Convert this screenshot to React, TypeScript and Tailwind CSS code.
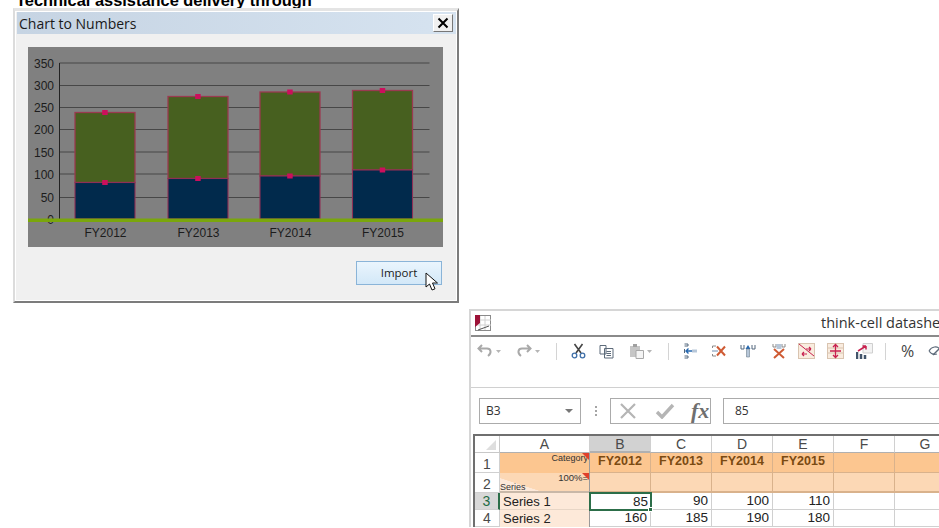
import React from "react";

const ui = "font-['Open_Sans','Noto_Sans',sans-serif]";
const arial = "font-['Liberation_Sans',Arial,sans-serif]";

function Chart() {
  const ticks = [
    [350, 63.5], [300, 86], [250, 108], [200, 130], [150, 152.5], [100, 174.5], [50, 198], [0, 220],
  ];
  const bars = [
    { x: 47, top: 65.5, split: 135.5, label: "FY2012" },
    { x: 140, top: 49.5, split: 131.5, label: "FY2013" },
    { x: 232, top: 45, split: 129, label: "FY2014" },
    { x: 324.5, top: 43.5, split: 123, label: "FY2015" },
  ];
  return (
    <svg width="415" height="200" viewBox="0 0 415 200" className="block">
      <rect width="415" height="200" fill="#808080" />
      {ticks.map(([v, y]) => (
        <g key={v}>
          {v !== 0 && <line x1="31.5" x2="401.5" y1={y - 47.5} y2={y - 47.5} stroke="#474747" strokeWidth="1" />}
          <text x="26" y={y - 47.5 + 4.5} textAnchor="end" fontSize="12" fill="#1c1c1c" fontFamily="Liberation Sans, Arial, sans-serif">
            {v}
          </text>
        </g>
      ))}
      <line x1="31.5" x2="31.5" y1="16" y2="172" stroke="#222" strokeWidth="1" />
      {bars.map((b) => (
        <g key={b.label}>
          <rect x={b.x} y={b.top} width="60" height={b.split - b.top} fill="#47601f" stroke="#9a3a50" strokeWidth="1.3" />
          <rect x={b.x} y={b.split} width="60" height={172 - b.split} fill="#012a4c" stroke="#8e2f55" strokeWidth="1.1" />
          <rect x={b.x + 27.2} y={b.top - 2.5} width="5.5" height="5" fill="#cc0f5c" />
          <rect x={b.x + 27.2} y={b.split - 2.5} width="5.5" height="5" fill="#cc0f5c" />
          <text x={b.x + 30.5} y="190" textAnchor="middle" fontSize="12" fill="#1c1c1c" fontFamily="Liberation Sans, Arial, sans-serif">
            {b.label}
          </text>
        </g>
      ))}
      <path d="M0 173.2H415" stroke="#7aa60c" strokeWidth="3.4" />
    </svg>
  );
}

function Cursor() {
  return (
    <svg width="15" height="21" viewBox="0 0 15 21" className="absolute left-[69px] top-[11px]">
      <path d="M1 1 L1 15 L4.5 12 L7 18 L10 16.8 L7.5 11 L12.5 11 Z" fill="#fff" stroke="#111" strokeWidth="1" />
    </svg>
  );
}

function Dialog() {
  return (
    <div className="ml-[13px] w-[446px] h-[295px] bg-[#f0f0f0] border-t-[3px] border-l-[2px] border-t-[#e4e4e4] border-l-[#dcdcdc] border-r-[2px] border-r-[#7c7c7c] border-b-[2px] border-b-[#7c7c7c] shadow-[inset_0_0_0_1px_#ffffff]">
      <div className="ml-[2px] mr-[1px] h-[22px] mt-[1px] flex items-center justify-between bg-gradient-to-r from-[#c6d4e3] to-[#d6e3f0]">
        <span className={`${ui} text-[14px] text-[#1a1a1a] pl-[2px] pt-[2px] leading-none`}>Chart to Numbers</span>
        <button className="w-[20px] h-[18px] mr-[3px] bg-[#f0f0f0] border border-t-white border-l-white border-r-[#777] border-b-[#777] flex items-center justify-center">
          <svg width="12" height="12" viewBox="0 0 12 12">
            <path d="M1.5 1.5 L10.5 10.5 M10.5 1.5 L1.5 10.5" stroke="#000" strokeWidth="2" />
          </svg>
        </button>
      </div>
      <div className="ml-[13px] mt-[13px]">
        <Chart />
      </div>
      <div className="mt-[14px] ml-[341px] relative">
        <div className={`w-[86px] h-[24px] border border-[#8ab4d8] bg-gradient-to-b from-[#eaf5fd] to-[#d3e8f8] flex items-center justify-center ${ui} text-[11.5px] text-[#1a1a1a]`}>
          Import
        </div>
        <Cursor />
      </div>
    </div>
  );
}

const Caret = () => (
  <svg width="5" height="3" viewBox="0 0 5 3" className="ml-[3px]">
    <path d="M0 0H5L2.5 3Z" fill="#b5b5b5" />
  </svg>
);
const Sep = ({ className = "" }: { className?: string }) => <div className={`w-px h-[17px] bg-[#d4d4d4] ${className}`} />;

function Toolbar() {
  return (
    <div className="h-[51px] border-b border-[#d0d0d0] flex items-start pt-[5px]">
      <div className="flex items-center h-[18px] ml-[6px]">
        <svg width="16" height="14" viewBox="0 0 16 14">
          <path d="M5 1 L1.5 4.5 L5 8 M2 4.5 H10 C14 4.5 15 9 11 12" fill="none" stroke="#a9a9a9" strokeWidth="2" />
        </svg>
        <Caret />
        <svg width="16" height="14" viewBox="0 0 16 14" className="ml-[15px]">
          <path d="M11 1 L14.5 4.5 L11 8 M14 4.5 H6 C2 4.5 1 9 5 12" fill="none" stroke="#a9a9a9" strokeWidth="2" />
        </svg>
        <Caret />
        <Sep className="ml-[16px]" />
        <svg width="15" height="16" viewBox="0 0 15 16" className="ml-[14px]">
          <path d="M3.5 1 L10 10 M11.5 1 L5 10" stroke="#444" strokeWidth="1.6" />
          <circle cx="3.5" cy="12.5" r="2.3" fill="none" stroke="#3f6fa8" strokeWidth="1.3" />
          <circle cx="11.5" cy="12.5" r="2.3" fill="none" stroke="#3f6fa8" strokeWidth="1.3" />
        </svg>
        <svg width="15" height="15" viewBox="0 0 15 15" className="ml-[13px]">
          <path d="M1 1.5H7V10H1Z M5.5 4.5H14V14H5.5Z" fill="#fff" stroke="#5d6b7a" />
          <path d="M7.5 7.5H12M7.5 9.5H12M7.5 11.5H12" stroke="#5d6b7a" />
        </svg>
        <svg width="15" height="16" viewBox="0 0 15 16" className="ml-[15px]">
          <path d="M1 3H11V14H1Z" fill="#c6c6c6" />
          <path d="M4 1H8V4H4Z" fill="#a0a0a0" />
          <path d="M7 7.5H14.5V15.5H7Z" fill="#f4f4f4" stroke="#a8a8a8" />
        </svg>
        <Caret />
        <Sep className="ml-[16px]" />
        <svg width="15" height="16" viewBox="0 0 15 16" className="ml-[14px]">
          <path d="M1.5 1H5V3H1.5M1.5 13H5V15H1.5M1.5 6V10" fill="none" stroke="#53677c" />
          <path d="M9 8H3M5.5 5.5L3 8L5.5 10.5" fill="none" stroke="#2668b0" strokeWidth="1.4" />
          <path d="M9 6.5H14V9.5H9Z" fill="#b7c7d9" />
        </svg>
        <svg width="16" height="14" viewBox="0 0 16 14" className="ml-[13px]">
          <path d="M5 2H1.5V4M5 12H1.5V10" fill="none" stroke="#8a8a8a" />
          <path d="M1 6H7V8H1Z" fill="#b7c7d9" />
          <path d="M6 2.5L14 11.5M14 2.5L6 11.5" stroke="#cf5b34" strokeWidth="2" />
        </svg>
        <svg width="16" height="14" viewBox="0 0 16 14" className="ml-[13px]">
          <path d="M1 1V5H4V1M12 1V5H15V1" fill="none" stroke="#53677c" />
          <path d="M8 1L5.5 5H10.5Z" fill="#2668b0" />
          <path d="M6.5 5H9.5V13H6.5Z" fill="#b7c7d9" stroke="#6f7f8f" strokeWidth="0.6" />
        </svg>
        <svg width="16" height="16" viewBox="0 0 16 16" className="ml-[15px]">
          <path d="M2 1V4H5V1M11 1V4H14V1" fill="none" stroke="#8a8a8a" />
          <path d="M5.5 1H10.5V6H5.5Z" fill="#b7c7d9" />
          <path d="M3 6L13 15M13 6L3 15" stroke="#cf5b34" strokeWidth="2" />
        </svg>
        <svg width="17" height="16" viewBox="0 0 17 16" className="ml-[11px]">
          <rect x="0.5" y="0.5" width="16" height="15" fill="#f9ecdf" stroke="#d9c4b0" />
          <path d="M1 1L16 13" stroke="#c8214f" />
          <path d="M4 11H9M4 11L6 9M4 11L6 13M8 6H13M13 6L11 4M13 6L11 8" fill="none" stroke="#c8214f" strokeWidth="1.2" />
        </svg>
        <svg width="17" height="16" viewBox="0 0 17 16" className="ml-[12px]">
          <rect x="0.5" y="0.5" width="16" height="15" fill="#f9ecdf" stroke="#d9c4b0" />
          <path d="M1 5H16M1 10H16" stroke="#d9c4b0" />
          <path d="M8.5 2V14M6 4L8.5 1.5L11 4M6 12L8.5 14.5L11 12M3 8H14" fill="none" stroke="#c8214f" strokeWidth="1.3" />
        </svg>
        <svg width="17" height="17" viewBox="0 0 17 17" className="ml-[12px]">
          <path d="M7 0.5H16.5V10H7Z" fill="#f3f3f3" stroke="#cfcfcf" />
          <path d="M1 9V16M5 11V16M9 12V16" stroke="#41546a" strokeWidth="2.5" />
          <path d="M2 8L10 3M10 3H6.5M10 3V6.5" fill="none" stroke="#c8214f" strokeWidth="1.5" />
        </svg>
        <Sep className="ml-[12px]" />
        <span className={`${ui} text-[16px] text-[#444] ml-[15px] leading-none`}>%</span>
        <svg width="16" height="14" viewBox="0 0 16 14" className="ml-[14px]">
          <path d="M1 7C4 2 9 2 12 5M1 7C3 10 6 11 9 10" fill="none" stroke="#5d6b7a" strokeWidth="1.2" />
          <path d="M5 11L14 2" stroke="#5d6b7a" strokeWidth="1.5" />
        </svg>
      </div>
    </div>
  );
}

function FormulaBar() {
  return (
    <div className="h-[46px] flex items-start pt-[10px] pl-[8px]">
      <div className={`w-[102px] h-[26px] border border-[#ababab] flex items-center justify-between pl-[6px] pr-[7px] ${ui} text-[12px] text-[#333]`}>
        <span>B3</span>
        <svg width="8" height="4" viewBox="0 0 8 4">
          <path d="M0 0H8L4 4Z" fill="#777" />
        </svg>
      </div>
      <div className="w-[2px] ml-[14px] mt-[8px] flex flex-col gap-[2px]">
        <div className="h-[2px] bg-[#a5a5a5]" />
        <div className="h-[2px] bg-[#a5a5a5]" />
        <div className="h-[2px] bg-[#a5a5a5]" />
      </div>
      <div className="w-[101px] h-[26px] ml-[13px] border border-[#ababab] flex items-center pl-[8px]">
        <svg width="18" height="16" viewBox="0 0 18 16">
          <path d="M2 1L16 15M16 1L2 15" stroke="#b5b5b5" strokeWidth="2.2" />
        </svg>
        <svg width="20" height="16" viewBox="0 0 20 16" className="ml-[18px]">
          <path d="M2 9L7 14L18 2" fill="none" stroke="#b5b5b5" strokeWidth="3.4" />
        </svg>
        <span className="ml-[16px] font-['Liberation_Serif',serif] italic font-bold text-[22px] leading-none text-[#6f6f6f]">fx</span>
      </div>
      <div className={`flex-1 h-[26px] ml-[12px] border border-[#ababab] flex items-center pl-[11px] ${ui} text-[12px] text-[#333]`}>
        85
      </div>
    </div>
  );
}

const colHead = "h-[17px] border-r border-[#d0d0d0] border-b border-b-[#b0b0b0] flex items-center justify-center text-[14px] text-[#4a4a4a] leading-none";
const rowHead = "border-r border-[#b5b5b5] border-b border-[#d0d0d0] flex items-end justify-center text-[14px] text-[#4a4a4a] leading-none pb-[1px]";
const yearCell = "h-[20px] bg-[#fcc690] border-r border-[#d9b28c] border-b border-[#d9b28c] flex items-center justify-center text-[12.5px] font-bold text-[#7a4a12] pb-[2px]";
const blankYear = "h-[20px] bg-[#fcc690] border-r border-[#d9b28c] border-b border-[#d9b28c]";
const pale = "h-[20px] bg-[#fcd8b5] border-r border-[#d9b28c] border-b-2 border-[#c9b8a8]";
const num = "h-[17px] bg-white border-r border-b border-[#d0d0d0] flex items-center justify-end pr-[3px] text-[13.5px] text-[#222] leading-none";
const empty = "h-[17px] bg-white border-r border-b border-[#d0d0d0]";
const Flag = () => <span className="absolute right-0 top-0 w-0 h-0 border-t-[7px] border-l-[7px] border-t-[#e0402a] border-l-transparent" />;

function Sheet() {
  return (
    <div className={`ml-[2px] border-t-2 border-l-2 border-[#6f6f6f] ${arial} grid grid-cols-[25px_90px_61px_61px_61px_61px_61px_61px] overflow-hidden`}>
      <div className="h-[17px] border-r border-b border-[#c8c8c8] flex items-end justify-end pr-[3px] pb-[2px]">
        <svg width="10" height="10" viewBox="0 0 10 10">
          <path d="M10 0V10H0Z" fill="#dedede" />
        </svg>
      </div>
      <div className={colHead}>A</div>
      <div className={`${colHead} bg-[#d2d2d2] text-[#1f6b45] border-b-2 border-b-[#2c6e49]`}>B</div>
      <div className={colHead}>C</div>
      <div className={colHead}>D</div>
      <div className={colHead}>E</div>
      <div className={colHead}>F</div>
      <div className={colHead}>G</div>

      <div className={`${rowHead} h-[20px]`}>1</div>
      <div className="relative h-[20px] bg-[#fcc690] border-r border-[#9a9a9a] flex items-start justify-end pr-[1px] text-[9px] text-[#333] leading-[10px]">
        Category
        <Flag />
      </div>
      <div className={yearCell}>FY2012</div>
      <div className={yearCell}>FY2013</div>
      <div className={yearCell}>FY2014</div>
      <div className={yearCell}>FY2015</div>
      <div className={blankYear} />
      <div className={blankYear} />

      <div className={`${rowHead} h-[20px]`}>2</div>
      <div className="relative h-[20px] bg-[linear-gradient(198deg,#fcd8b5_72%,#fde9d9_73%)] border-r border-[#9a9a9a] border-b-2 border-b-[#c9b8a8] text-[9.5px] text-[#333] leading-none">
        <span className="absolute right-[1px] top-0">100%=</span>
        <span className="absolute left-0 bottom-[-1px] leading-[10px] text-[9px]">Series</span>
        <Flag />
      </div>
      <div className={pale} />
      <div className={pale} />
      <div className={pale} />
      <div className={pale} />
      <div className={pale} />
      <div className={pale} />

      <div className="h-[17px] bg-[#d8d8d8] border-r-2 border-r-[#2c6e49] border-b border-[#d0d0d0] flex items-center justify-center text-[14px] text-[#1f6b45] leading-none">3</div>
      <div className="h-[17px] bg-[#fde9d9] border-r border-[#9a9a9a] border-b border-b-[#e8d6c6] flex items-center pl-[3px] text-[13px] text-[#222] leading-none">Series 1</div>
      <div className="relative h-[17px] bg-white outline outline-2 -outline-offset-1 outline-[#2c6e49] flex items-center justify-end pr-[3px] text-[13.5px] text-[#222] leading-none">
        85
        <span className="absolute right-[-2px] bottom-[-2px] w-[5px] h-[5px] bg-[#2c6e49] border border-white" />
      </div>
      <div className={num}>90</div>
      <div className={num}>100</div>
      <div className={num}>110</div>
      <div className={empty} />
      <div className={empty} />

      <div className="h-[17px] border-r border-[#b5b5b5] border-b border-[#d0d0d0] flex items-center justify-center text-[14px] text-[#4a4a4a] leading-none">4</div>
      <div className="h-[17px] bg-[#fde9d9] border-r border-[#9a9a9a] flex items-center pl-[3px] text-[13px] text-[#222] leading-none">Series 2</div>
      <div className={num}>160</div>
      <div className={num}>185</div>
      <div className={num}>190</div>
      <div className={num}>180</div>
      <div className={empty} />
      <div className={empty} />
    </div>
  );
}

function Datasheet() {
  return (
    <div className="ml-[469px] mt-[6px] w-[600px] bg-white border-t-2 border-l-2 border-[#d6d6d6]">
      <div className="h-[26px] flex items-center border-b-2 border-[#8a8a8a] bg-white">
        <svg width="17" height="17" viewBox="0 0 17 17" className="ml-[4px]">
          <rect x="0.5" y="0.5" width="15" height="15" fill="#fff" stroke="#8a8a8a" />
          <path d="M5 1V15M10 1V15M1 5H16M1 10H16" stroke="#d0d0d0" />
          <path d="M0 0H5V8L0 12Z" fill="#9d1238" />
          <path d="M3 15L14 11" stroke="#555" />
        </svg>
        <span className={`${ui} text-[14.5px] text-[#333] whitespace-nowrap ml-[329px] shrink-0`}>think-cell datasheet</span>
      </div>
      <Toolbar />
      <FormulaBar />
      <Sheet />
    </div>
  );
}

export default function App() {
  return (
    <div className="w-[939px] h-[528px] overflow-hidden bg-white">
      <div className="h-[8px] overflow-hidden">
        <div className={`${arial} font-bold text-[16.4px] leading-[16px] text-black pl-[16px] -mt-[8px] whitespace-nowrap`}>
          Technical assistance delivery through
        </div>
      </div>
      <Dialog />
      <Datasheet />
    </div>
  );
}
